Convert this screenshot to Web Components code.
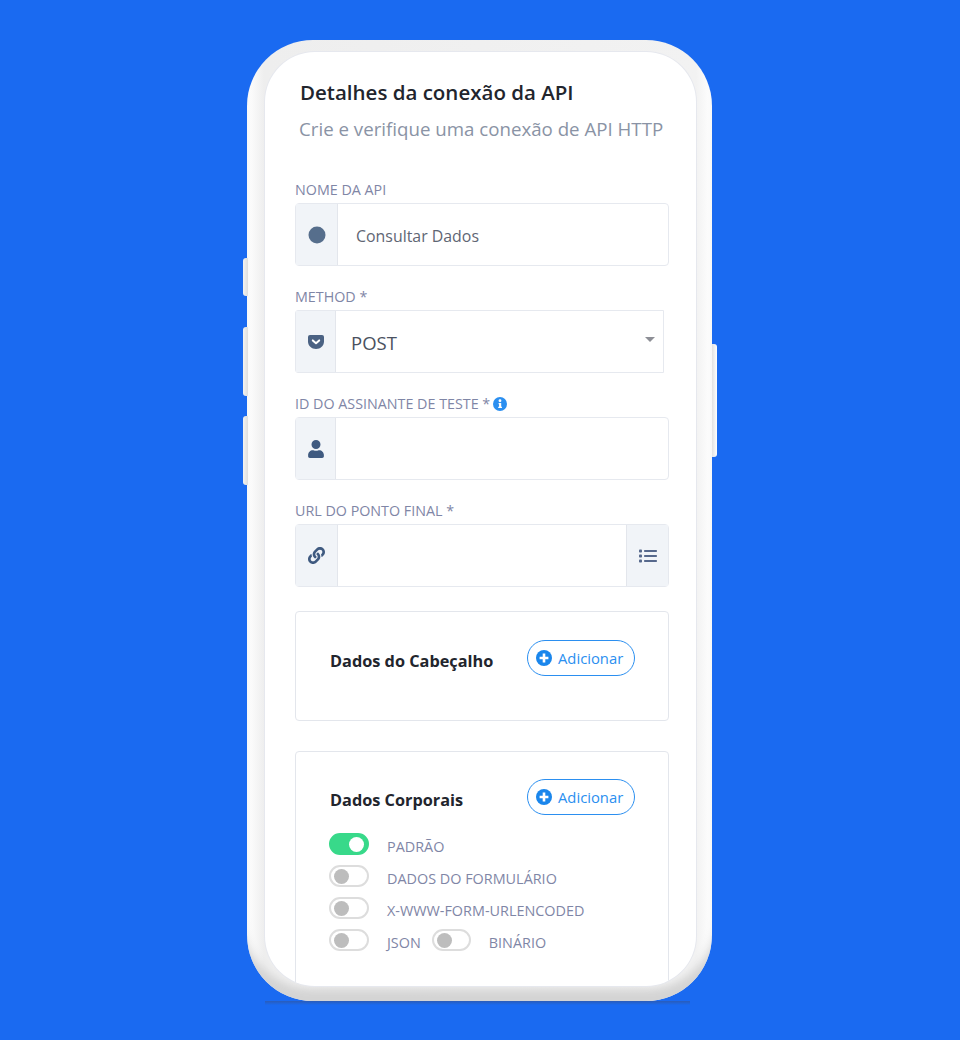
<!DOCTYPE html>
<html lang="pt">
<head>
<meta charset="utf-8">
<title>Detalhes da conexão da API</title>
<style>
  html, body { margin: 0; height: 100%; }
  body {
    background: #1a6af1;
    font-family: "Open Sans", "Noto Sans", sans-serif;
    overflow: hidden;
  }
  svg { display: block; }
</style>
</head>
<body>

<phone-frame>
  <page-header title-text="Detalhes da conexão da API" subtitle="Crie e verifique uma conexão de API HTTP"></page-header>

  <form-field label="NOME DA API" addon="42">
    <svg slot="icon" width="18" height="18" viewBox="0 0 18 18"><circle cx="9" cy="9" r="8.5" fill="#566e8c"/></svg>
    <span class="value">Consultar Dados</span>
  </form-field>

  <form-field label="METHOD *" addon="40" inset="5" kind="select">
    <svg slot="icon" width="16" height="14" viewBox="0 0 16 14"><path fill="#4b6283" d="M2 0h12a2 2 0 0 1 2 2v4.500C16 10.800 12.500 14 8 14S0 10.800 0 6.500V2a2 2 0 0 1 2-2z"/><path fill="none" stroke="#fff" stroke-width="2" stroke-linecap="round" stroke-linejoin="round" d="M4.800 5.400 8 8.300l3.200-2.900"/></svg>
    <span>POST</span>
  </form-field>

  <form-field label="ID DO ASSINANTE DE TESTE *" addon="40" info>
    <svg slot="icon" width="16" height="18" viewBox="0 0 448 512"><path fill="#3f5a80" d="M224 256a128 128 0 1 0 0-256 128 128 0 0 0 0 256zm89.600 32h-16.700a174.100 174.100 0 0 1-145.800 0h-16.700C60.200 288 0 348.200 0 422.400V464c0 26.500 21.500 48 48 48h352c26.500 0 48-21.500 48-48v-41.600c0-74.200-60.200-134.400-134.400-134.400z"/></svg>
  </form-field>

  <form-field label="URL DO PONTO FINAL *" addon="42" trailing>
    <svg slot="icon" width="17" height="17" viewBox="0 0 512 512"><path fill="#3f5a80" d="M326.612 185.391c59.747 59.809 58.927 155.698.36 214.59-.11.12-.24.25-.36.37l-67.2 67.2c-59.27 59.27-155.699 59.262-214.96 0-59.27-59.26-59.27-155.7 0-214.96l37.106-37.106c9.84-9.84 26.786-3.3 27.294 10.606.648 17.722 3.826 35.527 9.69 52.721 1.986 5.822.567 12.262-3.783 16.612l-13.087 13.087c-28.026 28.026-28.905 73.66-1.155 101.96 28.024 28.579 74.086 28.749 102.325.51l67.2-67.19c28.191-28.191 28.073-73.757 0-101.83-3.701-3.694-7.429-6.564-10.341-8.569a16.037 16.037 0 0 1-6.947-12.606c-.396-10.567 3.348-21.456 11.698-29.806l21.054-21.055c5.521-5.521 14.182-6.199 20.584-1.731a152.482 152.482 0 0 1 20.522 17.197zM467.547 44.449c-59.261-59.262-155.69-59.27-214.96 0l-67.2 67.2c-.12.12-.25.25-.36.37-58.566 58.892-59.387 154.781.36 214.59a152.454 152.454 0 0 0 20.521 17.196c6.402 4.468 15.064 3.789 20.584-1.731l21.054-21.055c8.35-8.35 12.094-19.239 11.698-29.806a16.037 16.037 0 0 0-6.947-12.606c-2.912-2.005-6.64-4.875-10.341-8.569-28.073-28.073-28.191-73.639 0-101.83l67.2-67.19c28.239-28.239 74.3-28.069 102.325.51 27.75 28.3 26.872 73.934-1.155 101.96l-13.087 13.087c-4.35 4.35-5.769 10.79-3.783 16.612 5.864 17.194 9.042 34.999 9.69 52.721.509 13.906 17.454 20.446 27.294 10.606l37.106-37.106c59.271-59.259 59.271-155.699.001-214.959z"/></svg>
    <svg slot="trailing" width="18" height="14" viewBox="0 0 18 14"><g fill="#56688c"><rect x="0" y="0.500" width="3" height="3" rx=".8"/><rect x="0" y="5.500" width="3" height="3" rx=".8"/><rect x="0" y="10.500" width="3" height="3" rx=".8"/><rect x="5" y="1" width="13" height="2" rx=".8"/><rect x="5" y="6" width="13" height="2" rx=".8"/><rect x="5" y="11" width="13" height="2" rx=".8"/></g></svg>
  </form-field>

  <data-card heading="Dados do Cabeçalho" style="height:110px;margin-top:3px"></data-card>

  <data-card heading="Dados Corporais" style="margin-top:9px;padding-top:27px;height:300px">
    <option-row><toggle-switch on></toggle-switch><span>PADRÃO</span></option-row>
    <option-row><toggle-switch></toggle-switch><span>DADOS DO FORMULÁRIO</span></option-row>
    <option-row><toggle-switch></toggle-switch><span>X-WWW-FORM-URLENCODED</span></option-row>
    <option-row><toggle-switch></toggle-switch><span>JSON</span><toggle-switch style="margin-left:11px;width:39px"></toggle-switch><span>BINÁRIO</span></option-row>
  </data-card>
</phone-frame>

<script>
  class PhoneFrame extends HTMLElement {
    constructor() {
      super();
      const shadow = this.attachShadow({ mode: 'open' });
      shadow.innerHTML = `
        <style>
          :host {
            display: block;
            box-sizing: border-box;
            position: relative;
            width: 465px;
            height: 961px;
            margin: 40px 0 0 247px;
            padding: 12px 16px 15px 18px;
            border-radius: 66px;
            background: linear-gradient(90deg, #fff 0, #eeeeee 17px, #f2f2f2 calc(100% - 16px), #fff 100%);
            box-shadow: inset 0 -16px 8px -4px #d4d4d4;
          }
          /* thin contact shadow under the phone */
          :host::after {
            content: "";
            position: absolute;
            left: 18px; right: 22px; bottom: -4px;
            height: 4px;
            filter: blur(.6px);
            background: linear-gradient(rgba(60, 80, 130, .5), rgba(60, 80, 130, 0));
          }
          .screen {
            box-sizing: border-box;
            height: 100%;
            padding: 0 27px 0 30px;
            background: #fff;
            border-radius: 50px;
            overflow: hidden;
            box-shadow: 0 0 0 1px #e6e8ee;
            display: flex;
            flex-direction: column;
            gap: 21px;
          }
          .btn {
            position: absolute;
            width: 5px;
            background: linear-gradient(90deg, #f2f2f2, #dedede);
          }
          .btn.l { left: -4px; border-radius: 3px 0 0 3px; }
          .btn.r { right: -5px; background: linear-gradient(90deg, #e2e2e2, #fff); border-radius: 0 3px 3px 0; }
        </style>
        <div class="btn l" style="top:218px;height:38px"></div>
        <div class="btn l" style="top:287px;height:69px"></div>
        <div class="btn l" style="top:376px;height:69px"></div>
        <div class="btn r" style="top:304px;height:113px"></div>
        <div class="screen"><slot></slot></div>
      `;
    }
  }

  class PageHeader extends HTMLElement {
    constructor() {
      super();
      const shadow = this.attachShadow({ mode: 'open' });
      shadow.innerHTML = `
        <style>
          :host { display: block; flex: none; padding: 25px 0 0 5px; height: 82px; }
          h1 { margin: 0; font: 600 20.500px/30px "Open Sans", sans-serif; color: #22252d; white-space: nowrap; }
          p { margin: 7px 0 0 -1px; font: 400 18.700px/30px "Open Sans", sans-serif; color: #8a93a5; white-space: nowrap; }
        </style>
        <h1>${this.getAttribute('title-text')}</h1>
        <p>${this.getAttribute('subtitle')}</p>
      `;
    }
  }

  class FormField extends HTMLElement {
    constructor() {
      super();
      const shadow = this.attachShadow({ mode: 'open' });
      const addon = this.getAttribute('addon') || 40;
      const isSelect = this.getAttribute('kind') === 'select';
      shadow.innerHTML = `
        <style>
          :host { display: block; flex: none; margin-right: ${this.getAttribute('inset') || 0}px; }
          .label {
            display: flex; align-items: center; gap: 3px;
            height: 20px; margin-bottom: 3px;
            font: 400 14.300px/20px "Open Sans", sans-serif;
            color: #7f86a6; white-space: nowrap;
          }
          .box {
            box-sizing: border-box;
            height: 63px;
            display: flex;
            border: 1px solid #e6e9ef;
            border-radius: ${isSelect ? '3px 0 0 3px' : '4px'};
          }
          .addon {
            flex: none;
            width: ${addon}px;
            display: flex; align-items: center; justify-content: center;
            background: #f1f4f8;
            box-sizing: border-box;
            border-right: 1px solid #e3e6ec;
          }
          .trail { border-right: 0; border-left: 1px solid #e3e6ec; width: 42px; }
          .main {
            flex: 1;
            display: flex; align-items: center;
            position: relative;
            padding-left: ${isSelect ? 15 : 18}px;
            padding-top: 2px;
            font: 400 ${isSelect ? 18.500 : 15.900}px/24px "Open Sans", sans-serif;
            color: ${isSelect ? '#4a5160' : '#5f6674'};
          }
          .caret {
            position: absolute; right: 8px; top: 26px;
            border-style: solid; border-width: 5px 5px 0; border-color: #8d8f96 transparent transparent;
          }
        </style>
        <div class="label">
          <span>${this.getAttribute('label')}</span>
          ${this.hasAttribute('info') ? `<svg width="14" height="14" viewBox="0 0 15 15" style="display:block"><circle cx="7.500" cy="7.500" r="7.500" fill="#2b8ff0"/><circle cx="7.500" cy="4" r="1.500" fill="#fff"/><path fill="#fff" d="M6 6.500h2.800V10.500h.8v1.300H5.600v-1.300h.9V7.800H6z"/></svg>` : ''}
        </div>
        <div class="box">
          <div class="addon"><slot name="icon"></slot></div>
          <div class="main"><slot></slot>${isSelect ? '<i class="caret"></i>' : ''}</div>
          ${this.hasAttribute('trailing') ? '<div class="addon trail"><slot name="trailing"></slot></div>' : ''}
        </div>
      `;
    }
  }

  class AddButton extends HTMLElement {
    constructor() {
      super();
      const shadow = this.attachShadow({ mode: 'open' });
      shadow.innerHTML = `
        <style>
          :host {
            display: flex; align-items: center; gap: 6px;
            box-sizing: border-box;
            flex: none;
            width: 108px; height: 36px;
            padding-left: 8px;
            border: 1.300px solid #2b8ff0;
            border-radius: 18px;
            font: 400 14.800px/20px "Open Sans", sans-serif;
            color: #2b8ff0;
            background: #fff;
          }
          svg { display: block; flex: none; }
        </style>
        <svg width="16" height="16" viewBox="0 0 16 16"><circle cx="8" cy="8" r="8" fill="#1a86ec"/><path fill="none" stroke="#fff" stroke-width="2.600" d="M8 3.600v8.800M3.600 8h8.800"/></svg>
        <span>Adicionar</span>
      `;
    }
  }

  class DataCard extends HTMLElement {
    constructor() {
      super();
      const shadow = this.attachShadow({ mode: 'open' });
      shadow.innerHTML = `
        <style>
          :host {
            display: block;
            box-sizing: border-box;
            flex: none;
            padding: 28px 33px 0 34px;
            border: 1px solid #e3e6ec;
            border-radius: 4px;
          }
          .head { display: flex; justify-content: space-between; align-items: flex-start; }
          h2 { margin: 0; padding-top: 10px; font: 700 16.300px/22px "Open Sans", sans-serif; color: #22252d; white-space: nowrap; }
          .body { margin-top: 18px; display: flex; flex-direction: column; gap: 10px; margin-left: -1px; }
        </style>
        <div class="head">
          <h2>${this.getAttribute('heading')}</h2>
          <add-button></add-button>
        </div>
        <div class="body"><slot></slot></div>
      `;
    }
  }

  class OptionRow extends HTMLElement {
    constructor() {
      super();
      const shadow = this.attachShadow({ mode: 'open' });
      shadow.innerHTML = `
        <style>
          :host {
            display: flex; align-items: center; height: 22px;
            font: 400 14.400px/22px "Open Sans", sans-serif;
            color: #7f86a6; white-space: nowrap;
          }
          ::slotted(span) { margin-left: 18px; position: relative; top: 3px; }
        </style>
        <slot></slot>
      `;
    }
  }

  class ToggleSwitch extends HTMLElement {
    constructor() {
      super();
      const shadow = this.attachShadow({ mode: 'open' });
      const on = this.hasAttribute('on');
      shadow.innerHTML = `
        <style>
          :host {
            display: flex; align-items: center;
            justify-content: ${on ? 'flex-end' : 'flex-start'};
            box-sizing: border-box;
            flex: none;
            width: 40px; height: 22px;
            padding: 0 3px;
            border-radius: 11px;
            border: 2px solid ${on ? '#38d98a' : '#dddddd'};
            background: ${on ? '#38d98a' : '#fff'};
          }
          i { display: block; width: 15px; height: 15px; border-radius: 50%; background: ${on ? '#fff' : '#bdbdbd'}; }
        </style>
        <i></i>
      `;
    }
  }

  customElements.define('phone-frame', PhoneFrame);
  customElements.define('page-header', PageHeader);
  customElements.define('form-field', FormField);
  customElements.define('add-button', AddButton);
  customElements.define('data-card', DataCard);
  customElements.define('option-row', OptionRow);
  customElements.define('toggle-switch', ToggleSwitch);
</script>
</body>
</html>
